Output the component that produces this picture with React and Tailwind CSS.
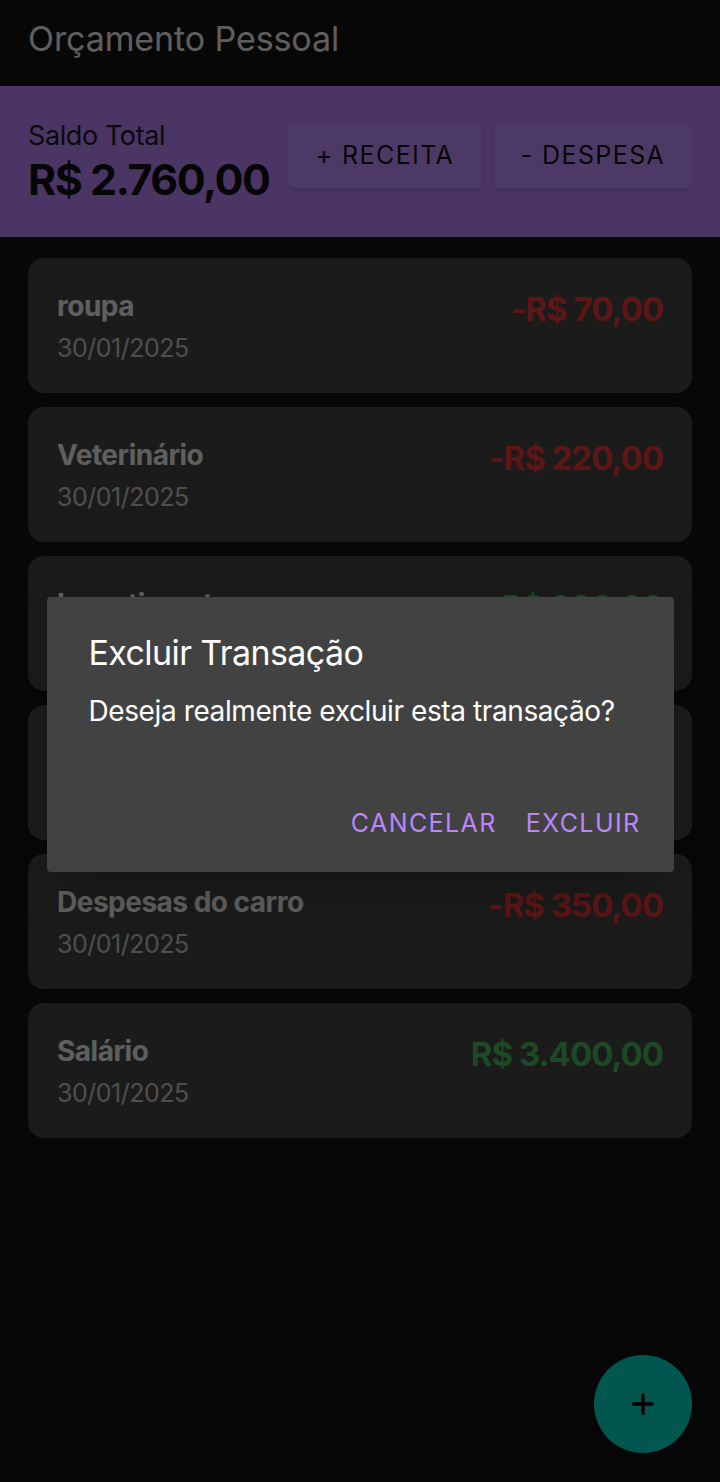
import React from 'react';

const transacoes = [
  { id: 1, titulo: 'roupa', data: '30/01/2025', valor: -70 },
  { id: 2, titulo: 'Veterinário', data: '30/01/2025', valor: -220 },
  { id: 3, titulo: 'Investimento', data: '30/01/2025', valor: 600 },
  { id: 4, titulo: 'Aluguel', data: '30/01/2025', valor: -600 },
  { id: 5, titulo: 'Despesas do carro', data: '30/01/2025', valor: -350 },
  { id: 6, titulo: 'Salário', data: '30/01/2025', valor: 3400 },
];

function formatar(v) {
  const abs = Math.abs(v).toLocaleString('pt-BR', { minimumFractionDigits: 2, maximumFractionDigits: 2 });
  return (v < 0 ? '-' : '') + 'R$ ' + abs;
}

export default function App() {
  const saldo = transacoes.reduce((s, t) => s + t.valor, 0);

  return (
    <div className="relative min-h-[1482px] bg-[#121212] font-['Inter',sans-serif]">
      <div className="h-[86px] flex items-center px-7 pb-[10px]">
        <h1 className="text-[34px] text-[#ebebeb] tracking-[-0.1px]">Orçamento Pessoal</h1>
      </div>

      <div className="h-[151px] bg-[#bb86fc] flex items-start justify-between px-7 pt-[32px]">
        <div className="flex flex-col">
          <span className="text-[27px] leading-[36px] text-[#1a1a1a] tracking-[-0.4px]">Saldo Total</span>
          <span className="text-[43px] leading-[50px] font-bold text-[#111] tracking-[-1.5px]">{formatar(saldo)}</span>
        </div>
        <div className="flex gap-3 mt-[6px]">
          <button className="w-[194px] h-[64px] rounded-md bg-[#c090fe] shadow-md text-[25px] tracking-[1.4px] text-[#111]">+ RECEITA</button>
          <button className="w-[198px] h-[64px] rounded-md bg-[#c090fe] shadow-md text-[25px] tracking-[1.4px] text-[#111]">- DESPESA</button>
        </div>
      </div>

      <ul className="flex flex-col gap-[14px] px-7 pt-[21px]">
        {transacoes.map((t) => (
          <li key={t.id} className="h-[135px] rounded-2xl bg-[#444444] flex justify-between pl-[29px] pr-[29px] pt-[30px]">
            <div className="flex flex-col">
              <span className="text-[28px] leading-[36px] font-bold text-[#ededed] tracking-[-0.5px]">{t.titulo}</span>
              <span className="text-[25px] leading-[34px] mt-[7px] text-[#c4c4c4] tracking-[-0.5px]">{t.data}</span>
            </div>
            <span className={`text-[33px] leading-[42px] font-bold tracking-[-1px] ${t.valor < 0 ? 'text-[#e63838]' : 'text-[#46b95a]'}`}>
              {formatar(t.valor)}
            </span>
          </li>
        ))}
      </ul>

      <button className="absolute right-7 bottom-[29px] w-[98px] h-[98px] rounded-full bg-[#03dac5] shadow-lg flex items-center justify-center">
        <svg width="28" height="28" viewBox="0 0 24 24" fill="none" stroke="#000" strokeWidth="3" strokeLinecap="round">
          <path d="M12 4v16M4 12h16" />
        </svg>
      </button>

      <div className="absolute inset-0 bg-black/60 flex items-start justify-center pt-[597px]">
        <div className="w-[627px] h-[275px] rounded bg-[#424242] shadow-2xl flex flex-col pl-[42px] pr-[33px] pt-[34px]">
          <h2 className="text-[34px] leading-[44px] text-white tracking-[-0.6px]">Excluir Transação</h2>
          <p className="text-[28px] leading-[36px] mt-[18px] text-white tracking-[-0.4px]">Deseja realmente excluir esta transação?</p>
          <div className="flex justify-end gap-[29px] mt-auto mb-[30px]">
            <button className="text-[25px] tracking-[1.4px] text-[#bb86fc]">CANCELAR</button>
            <button className="text-[25px] tracking-[1.4px] text-[#bb86fc]">EXCLUIR</button>
          </div>
        </div>
      </div>
    </div>
  );
}
